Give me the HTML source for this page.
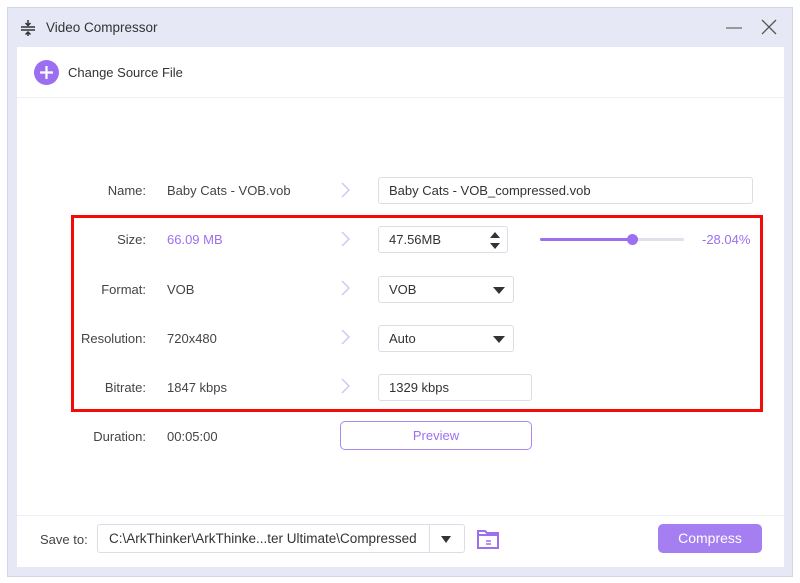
<!DOCTYPE html>
<html><head><style>
*{margin:0;padding:0;box-sizing:border-box}
body{width:800px;height:583px;background:#fff;font-family:"Liberation Sans",Arial,sans-serif;position:relative;overflow:hidden;color:#333;font-size:13px}
.win{position:absolute;left:7px;top:7px;width:786px;height:570px;background:#e6e8f6;border:1px solid #d4d6e4}
.panel{position:absolute;left:17px;top:47px;width:767px;height:520px;background:#fff}
.a{position:absolute}
.lbl{position:absolute;width:146px;text-align:right;left:0;font-size:13px;color:#444}
.val{position:absolute;left:167px;font-size:13px;color:#444}
.box{position:absolute;border:1px solid #dcdde6;border-radius:3px;background:#fff;font-size:13px;color:#333;padding-left:10px;display:flex;align-items:center}
.chev{position:absolute;left:340px;width:12px;height:16px}
.dd{position:absolute;right:8px;top:50%;margin-top:-3px;width:0;height:0;border-left:6px solid transparent;border-right:6px solid transparent;border-top:7px solid #333}
</style></head><body>
<div class="win"></div>
<div class="a" style="left:20px;top:20px"><svg width="16" height="16" viewBox="0 0 16 16"><path d="M1 7h14M1 10h14" stroke="#333" stroke-width="1.6"/><path d="M8 0v5M5.5 3L8 5.5 10.5 3M8 16v-4M5.5 14.5L8 12l2.5 2.5" stroke="#333" stroke-width="1.5" fill="none"/></svg></div>
<div class="a" style="left:46px;top:20px;font-size:13.5px;color:#333">Video Compressor</div>
<div class="a" style="left:726px;top:27px;width:16px;height:1.5px;background:#999"></div>
<svg class="a" style="left:761px;top:19px" width="16" height="16"><path d="M1 1L15 15M15 1L1 15" stroke="#555" stroke-width="1.3"/></svg>
<div class="panel"></div>
<div class="a" style="left:17px;top:97px;width:767px;height:1px;background:#eef0f5"></div>
<div class="a" style="left:34px;top:60px;width:25px;height:25px;border-radius:50%;background:#9b6ff0"></div>
<svg class="a" style="left:34px;top:60px" width="25" height="25"><path d="M12.5 6v13M6 12.5h13" stroke="#fff" stroke-width="2.2"/></svg>
<div class="a" style="left:68px;top:65px;font-size:13px;color:#333">Change Source File</div>

<div class="lbl" style="top:183px">Name:</div><div class="val" style="top:183px">Baby Cats - VOB.vob</div>
<div class="lbl" style="top:232px">Size:</div><div class="val" style="top:232px;color:#9b6ff0">66.09 MB</div>
<div class="lbl" style="top:282px">Format:</div><div class="val" style="top:282px">VOB</div>
<div class="lbl" style="top:331px">Resolution:</div><div class="val" style="top:331px">720x480</div>
<div class="lbl" style="top:380px">Bitrate:</div><div class="val" style="top:380px">1847 kbps</div>
<div class="lbl" style="top:429px">Duration:</div><div class="val" style="top:429px">00:05:00</div>

<svg class="chev" style="top:182px" viewBox="0 0 12 16"><path d="M2 1l7 7-7 7" stroke="#d4c6f7" stroke-width="1.5" fill="none"/></svg>
<svg class="chev" style="top:231px" viewBox="0 0 12 16"><path d="M2 1l7 7-7 7" stroke="#d4c6f7" stroke-width="1.5" fill="none"/></svg>
<svg class="chev" style="top:280px" viewBox="0 0 12 16"><path d="M2 1l7 7-7 7" stroke="#d4c6f7" stroke-width="1.5" fill="none"/></svg>
<svg class="chev" style="top:329px" viewBox="0 0 12 16"><path d="M2 1l7 7-7 7" stroke="#d4c6f7" stroke-width="1.5" fill="none"/></svg>
<svg class="chev" style="top:378px" viewBox="0 0 12 16"><path d="M2 1l7 7-7 7" stroke="#d4c6f7" stroke-width="1.5" fill="none"/></svg>

<div class="box" style="left:378px;top:177px;width:375px;height:27px">Baby Cats - VOB_compressed.vob</div>
<div class="box" style="left:378px;top:226px;width:130px;height:27px">47.56MB
<div class="a" style="right:7px;top:5px;border-left:5px solid transparent;border-right:5px solid transparent;border-bottom:6px solid #333"></div>
<div class="a" style="right:7px;top:16px;border-left:5px solid transparent;border-right:5px solid transparent;border-top:6px solid #333"></div></div>
<div class="a" style="left:540px;top:238px;width:144px;height:3px;background:#e0e0ea;border-radius:2px"></div>
<div class="a" style="left:540px;top:238px;width:92px;height:3px;background:#9b6ff0;border-radius:2px"></div>
<div class="a" style="left:627px;top:234px;width:11px;height:11px;border-radius:50%;background:#9b6ff0"></div>
<div class="a" style="left:702px;top:232px;color:#9b6ff0;font-size:13px">-28.04%</div>
<div class="box" style="left:378px;top:276px;width:136px;height:27px">VOB<div class="dd"></div></div>
<div class="box" style="left:378px;top:325px;width:136px;height:27px">Auto<div class="dd"></div></div>
<div class="box" style="left:378px;top:374px;width:154px;height:27px">1329 kbps</div>
<div class="a" style="left:340px;top:421px;width:192px;height:29px;border:1px solid #a88af2;border-radius:5px;color:#9b6ff0;font-size:13px;text-align:center;line-height:27px">Preview</div>

<div class="a" style="left:71px;top:215px;width:692px;height:197px;border:3px solid #f50a0a"></div>

<div class="a" style="left:17px;top:515px;width:767px;height:1px;background:#eef0f5"></div>
<div class="a" style="left:40px;top:532px;font-size:13px;color:#444">Save to:</div>
<div class="box" style="left:97px;top:524px;width:368px;height:29px;padding-left:11px;font-size:13.5px">C:\ArkThinker\ArkThinke...ter Ultimate\Compressed
<div class="a" style="left:331px;top:0;width:1px;height:27px;background:#dcdde6"></div>
<div class="a" style="left:343px;top:11px;border-left:5px solid transparent;border-right:5px solid transparent;border-top:7px solid #333"></div></div>
<svg class="a" style="left:476px;top:528px" width="24" height="22"><path d="M2 3h7l2 2h11v15H2z" fill="none" stroke="#9b6ff0" stroke-width="2"/><path d="M2 7h20" stroke="#9b6ff0" stroke-width="2"/><path d="M10 13h5M10 16h5" stroke="#9b6ff0" stroke-width="1.5"/></svg>
<div class="a" style="left:658px;top:524px;width:104px;height:29px;background:#a57ff2;border-radius:5px;color:#fff;font-size:14px;text-align:center;line-height:29px">Compress</div>
</body></html>
